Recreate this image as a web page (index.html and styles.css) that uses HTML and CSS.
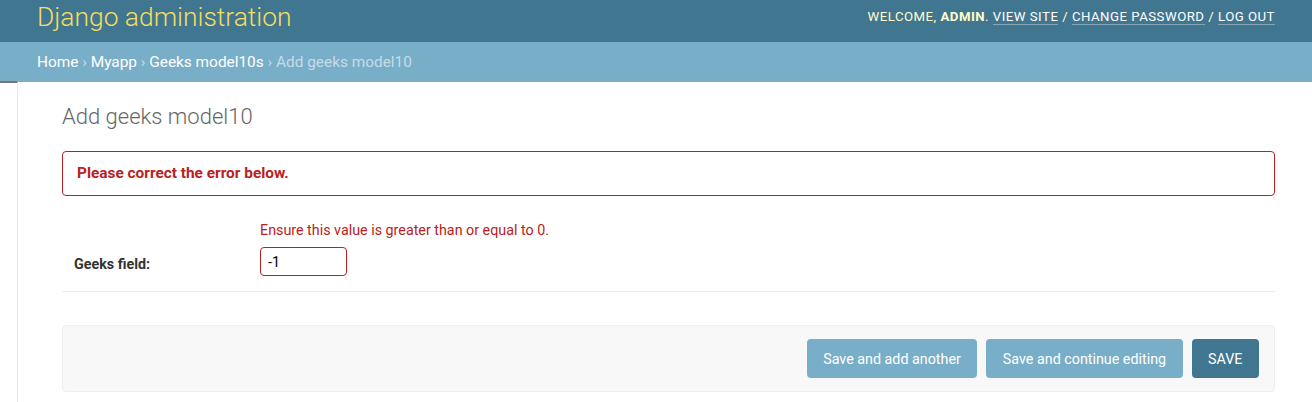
FILE: index.html
```html
<!DOCTYPE html>
<html lang="en">
<head>
<meta charset="utf-8">
<title>Add geeks model10 | Django site admin</title>
<link rel="stylesheet" href="styles.css">
</head>
<body>
<header class="header">
  <div class="branding">Django administration</div>
  <div class="user-tools">Welcome, <strong>admin</strong>. <a href="#">View site</a> / <a href="#">Change password</a> / <a href="#">Log out</a></div>
</header>
<nav class="breadcrumbs"><a href="#">Home</a> <span class="sep">›</span> <a href="#">Myapp</a> <span class="sep">›</span> <a href="#">Geeks model10s</a> <span class="sep">›</span> Add geeks model10</nav>
<div class="main">
  <div class="toggle"></div>
  <div class="content">
    <h1 class="title">Add geeks model10</h1>
    <p class="errornote">Please correct the error below.</p>
    <div class="form-row">
      <label class="field-label">Geeks field:</label>
      <div class="field-box">
        <div class="errorlist">Ensure this value is greater than or equal to 0.</div>
        <input class="field-input" type="text" value="-1">
      </div>
    </div>
    <div class="submit-row">
      <button class="btn">Save and add another</button>
      <button class="btn">Save and continue editing</button>
      <button class="btn btn-default">SAVE</button>
    </div>
  </div>
</div>
</body>
</html>
```
FILE: styles.css
```css
* { box-sizing: border-box; }
html, body { margin: 0; padding: 0; }
body {
  font-family: Roboto, "Liberation Sans", sans-serif;
  color: #333;
  background: #fff;
  width: 1312px;
  height: 402px;
  overflow: hidden;
}
.header {
  height: 42px;
  background: #417690;
  display: flex;
  align-items: flex-start;
  justify-content: space-between;
  padding: 0 37px 0 37px;
}
.branding {
  font-size: 26.4px;
  font-weight: 300;
  line-height: 30px;
  color: #f5dd5d;
  padding-top: 1.5px;
}
.user-tools {
  font-size: 13.2px;
  line-height: 16px;
  letter-spacing: 0.5px;
  text-transform: uppercase;
  color: #ffc;
  padding-top: 8.5px;
}
.user-tools strong { font-weight: 700; }
.user-tools a {
  color: #fff;
  text-decoration: none;
  border-bottom: 1px solid rgba(255,255,255,0.35);
}
.breadcrumbs {
  height: 40px;
  background: #79aec8;
  color: #c4dce8;
  font-size: 15.4px;
  line-height: 20px;
  padding: 10px 37px 0;
}
.breadcrumbs a { color: #fff; text-decoration: none; }
.breadcrumbs .sep { color: #c4dce8; }
.main {
  display: flex;
  height: 320px;
}
.toggle {
  width: 18px;
  flex: 0 0 18px;
  border-right: 1px solid #eaeaea;
  border-top: 2px solid #757575;
  margin-top: -1px;
  height: 321px;
}
.content {
  flex: 1;
  padding: 20px 37px 0 44px;
}
.title {
  margin: 0 0 19px;
  font-size: 22px;
  font-weight: 300;
  line-height: 30px;
  color: #666;
}
.errornote {
  margin: 0;
  height: 45px;
  border: 1px solid #ba2121;
  border-radius: 4px;
  color: #ba2121;
  font-size: 15.4px;
  font-weight: 700;
  line-height: 23px;
  padding: 10px 14px;
}
.form-row {
  display: flex;
  border-bottom: 1px solid #eee;
  padding: 26px 12px 15px;
}
.field-label {
  width: 186px;
  flex: 0 0 186px;
  font-size: 14.3px;
  line-height: 17px;
  font-weight: 700;
  color: #333;
  padding-top: 34px;
}
.field-box { display: flex; flex-direction: column; }
.errorlist {
  color: #ba2121;
  font-size: 14.3px;
  line-height: 17px;
  margin-bottom: 8px;
}
.field-input {
  width: 87px;
  height: 29px;
  border: 1px solid #ba2121;
  border-radius: 4px;
  padding: 2px 7px;
  font-family: Roboto, "Liberation Sans", sans-serif;
  font-size: 14.3px;
  color: #000;
  outline: none;
}
.submit-row {
  margin-top: 33px;
  background: #f8f8f8;
  border: 1px solid #eee;
  border-radius: 4px;
  padding: 13px 15px;
  display: flex;
  justify-content: flex-end;
  gap: 9px;
}
.btn {
  height: 39px;
  border: 0;
  border-radius: 4px;
  background: #79aec8;
  color: #fff;
  font-family: Roboto, "Liberation Sans", sans-serif;
  font-size: 14.3px;
  padding: 0 16.5px;
  cursor: pointer;
}
.btn-default { background: #417690; }
```
